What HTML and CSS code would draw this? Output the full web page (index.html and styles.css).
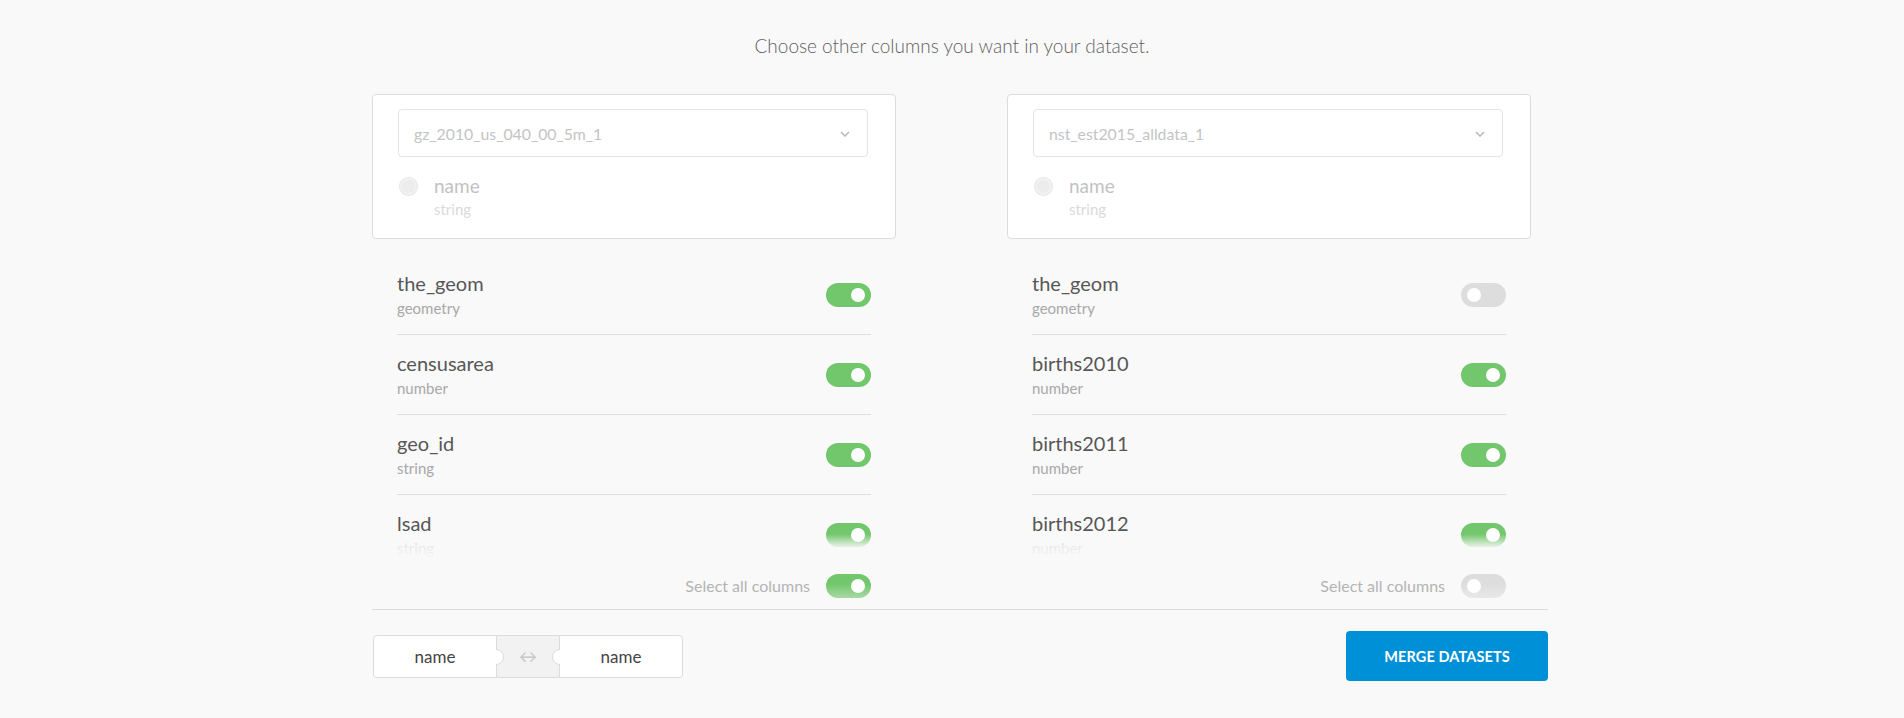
FILE: index.html
```html
<!DOCTYPE html>
<html lang="en">
<head>
<meta charset="utf-8">
<title>Merge datasets</title>
<link rel="stylesheet" href="styles.css">
</head>
<body>
<main class="page">
  <p class="intro">Choose other columns you want in your dataset.</p>
  <div class="merge">
    <div class="columns">
      <section class="col">
        <div class="card">
          <div class="select">
            <span class="select-value">gz_2010_us_040_00_5m_1</span>
            <svg class="chevron" width="10" height="6" viewBox="0 0 10 6"><path d="M1 1l4 4 4-4" fill="none" stroke="#bbb" stroke-width="1.6"/></svg>
          </div>
          <div class="key">
            <span class="radio"></span>
            <div class="key-text">
              <div class="key-name">name</div>
              <div class="key-type">string</div>
            </div>
          </div>
        </div>
        <div class="list">
          <div class="row"><div class="row-text"><div class="row-name">the_geom</div><div class="row-type">geometry</div></div><span class="toggle on"></span></div>
          <div class="row"><div class="row-text"><div class="row-name">censusarea</div><div class="row-type">number</div></div><span class="toggle on"></span></div>
          <div class="row"><div class="row-text"><div class="row-name">geo_id</div><div class="row-type">string</div></div><span class="toggle on"></span></div>
          <div class="row"><div class="row-text"><div class="row-name">lsad</div><div class="row-type">string</div></div><span class="toggle on"></span></div>
        </div>
        <div class="select-all"><span>Select all columns</span><span class="toggle on fade"></span></div>
      </section>
      <section class="col">
        <div class="card">
          <div class="select">
            <span class="select-value">nst_est2015_alldata_1</span>
            <svg class="chevron" width="10" height="6" viewBox="0 0 10 6"><path d="M1 1l4 4 4-4" fill="none" stroke="#bbb" stroke-width="1.6"/></svg>
          </div>
          <div class="key">
            <span class="radio"></span>
            <div class="key-text">
              <div class="key-name">name</div>
              <div class="key-type">string</div>
            </div>
          </div>
        </div>
        <div class="list">
          <div class="row"><div class="row-text"><div class="row-name">the_geom</div><div class="row-type">geometry</div></div><span class="toggle"></span></div>
          <div class="row"><div class="row-text"><div class="row-name">births2010</div><div class="row-type">number</div></div><span class="toggle on"></span></div>
          <div class="row"><div class="row-text"><div class="row-name">births2011</div><div class="row-type">number</div></div><span class="toggle on"></span></div>
          <div class="row"><div class="row-text"><div class="row-name">births2012</div><div class="row-type">number</div></div><span class="toggle on"></span></div>
        </div>
        <div class="select-all"><span>Select all columns</span><span class="toggle fade"></span></div>
      </section>
    </div>
    <div class="footer">
      <div class="join">
        <div class="join-box left">name</div>
        <div class="join-mid">&harr;</div>
        <div class="join-box right">name</div>
      </div>
      <button class="merge-btn">MERGE DATASETS</button>
    </div>
  </div>
</main>
</body>
</html>
```

FILE: styles.css
```css
* { box-sizing: border-box; }

html, body {
  margin: 0;
  padding: 0;
  background: #f9f9f9;
  font-family: Lato, "Open Sans", "Liberation Sans", sans-serif;
  color: #555;
}

.page {
  padding-top: 34px;
}

.intro {
  margin: 0;
  text-align: center;
  font-size: 19px;
  line-height: 24px;
  font-weight: 300;
  color: #5f5f5f;
}

.merge {
  width: 1176px;
  margin-left: calc(50% - 580px);
  margin-top: 36px;
}

.columns {
  display: grid;
  grid-template-columns: 524px 524px;
  column-gap: 111px;
}

.card {
  background: #fff;
  border: 1px solid #dcdcdc;
  border-radius: 4px;
  padding: 14px 27px 18px 25px;
}

.select {
  height: 48px;
  border: 1px solid #e4e4e4;
  border-radius: 4px;
  display: flex;
  align-items: center;
  justify-content: space-between;
  padding: 0 17px 0 15px;
}

.select-value {
  font-size: 15.8px;
  color: #c4c4c4;
}

.chevron { display: block; margin-top: 2px; }

.key {
  display: flex;
  align-items: flex-start;
  margin-top: 17px;
}

.radio {
  width: 17px;
  height: 17px;
  border-radius: 50%;
  background: #ececec;
  border: 2px solid #f2f2f2;
  box-shadow: 0 0 0 1px #e6e6e6;
  margin: 4px 17px 0 2px;
  flex: none;
}

.key-name {
  font-size: 19px;
  line-height: 24px;
  color: #c2c2c2;
}

.key-type {
  font-size: 15px;
  line-height: 22px;
  color: #dadada;
}

.list {
  position: relative;
  height: 305px;
  overflow: hidden;
  margin: 16px 25px 0 25px;
}

.list::after {
  content: "";
  position: absolute;
  left: 0;
  right: 0;
  bottom: 0;
  height: 26px;
  background: linear-gradient(to bottom, rgba(249,249,249,0), rgba(249,249,249,0.8) 45%, rgba(249,249,249,0.97));
}

.row {
  height: 80px;
  border-bottom: 1px solid #dedede;
  display: flex;
  align-items: center;
  justify-content: space-between;
}

.row-text {
  padding-top: 3px;
}

.row-name {
  font-size: 20px;
  line-height: 24px;
  color: #575757;
}

.row-type {
  font-size: 15px;
  line-height: 26px;
  color: #a8a8a8;
}

.toggle {
  position: relative;
  width: 45px;
  height: 24px;
  border-radius: 12px;
  background: #dddddd;
  flex: none;
}

.toggle::after {
  content: "";
  position: absolute;
  top: 5px;
  left: 6px;
  width: 14px;
  height: 14px;
  border-radius: 50%;
  background: #fff;
}

.toggle.on { background: #72c66b; }
.toggle.on::after { left: auto; right: 6px; }

.toggle.fade { background-image: linear-gradient(to bottom, rgba(249,249,249,0) 40%, rgba(249,249,249,0.4)); }

.select-all {
  display: flex;
  justify-content: flex-end;
  align-items: flex-start;
  gap: 16px;
  margin: 14px 25px 0 25px;
  height: 35px;
  font-size: 16px;
  line-height: 24px;
  color: #b4b4b4;
}

.footer {
  border-top: 1px solid #dcdcdc;
  padding-top: 21px;
  display: flex;
  justify-content: space-between;
  align-items: center;
}

.join {
  display: flex;
  height: 43px;
  margin-left: 1px;
}

.join-box {
  position: relative;
  width: 124px;
  background: #fff;
  border: 1px solid #dcdcdc;
  display: flex;
  align-items: center;
  justify-content: center;
  font-size: 17px;
  color: #444;
}

.join-box.left { border-radius: 4px 0 0 4px; }
.join-box.right { border-radius: 0 4px 4px 0; }

.join-box.left::after,
.join-box.right::before {
  content: "";
  position: absolute;
  top: 50%;
  width: 14px;
  height: 14px;
  margin-top: -7px;
  border-radius: 50%;
  background: #fff;
  border: 1px solid #dcdcdc;
  z-index: 1;
}

.join-box.left::after { right: -8px; clip-path: inset(0 0 0 50%); }
.join-box.right::before { left: -8px; clip-path: inset(0 50% 0 0); }

.join-mid {
  width: 62px;
  background: #f2f2f2;
  border-top: 1px solid #dcdcdc;
  border-bottom: 1px solid #dcdcdc;
  display: flex;
  align-items: center;
  justify-content: center;
  font-size: 18px;
  color: #c8c8c8;
}

.merge-btn {
  width: 202px;
  height: 50px;
  border: 0;
  border-radius: 4px;
  background: #0090d7;
  color: #fff;
  font-family: Lato, "Open Sans", sans-serif;
  font-weight: 700;
  font-size: 14.5px;
  letter-spacing: 0.1px;
  margin-right: 0;
}
```
